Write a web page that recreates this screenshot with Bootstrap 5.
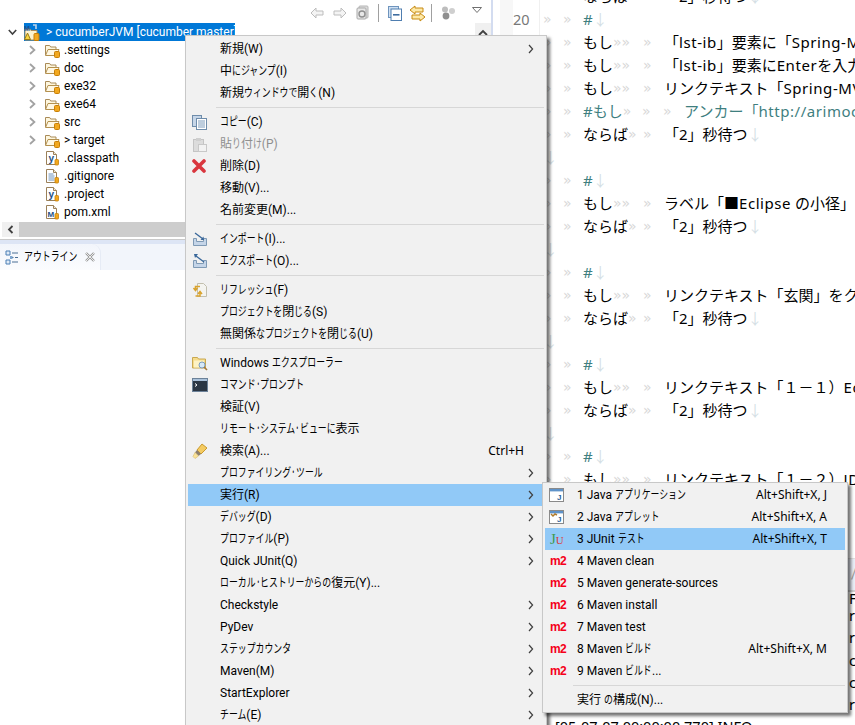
<!DOCTYPE html>
<html lang="ja">
<head>
<meta charset="utf-8">
<title>Eclipse</title>
<link href="https://cdn.jsdelivr.net/npm/bootstrap@5.3.0/dist/css/bootstrap.min.css" rel="stylesheet">
<style>
html,body{height:725px;overflow:hidden;background:#fff}
body{font-family:Roboto,"Noto Sans CJK JP",sans-serif;font-size:12px;color:#000;position:relative}
.wbench{width:855px;height:725px}
.navpane{width:491px;flex:none}
.sash{width:9px;flex:none;background:linear-gradient(90deg,#d3dcf0 0 2px,#fff 2px)}
.edpane{width:355px;flex:none;overflow:hidden}
.tbar{height:23px;padding:3px 0 0 310px;gap:9px}
.tbar .tsep{width:1px;height:18px;background:#a0a0a0}
.tbar .lnkic{margin:0 -4px 0 -2px}
.treewrap{height:199px;overflow:hidden}
.tree{--bs-list-group-bg:transparent;--bs-list-group-border-width:0;--bs-list-group-item-padding-x:0;--bs-list-group-item-padding-y:0;border-radius:0}
.trow{height:18px;line-height:18px;font-size:12px;color:#000;white-space:nowrap}
.trow .chev{width:7px;margin-left:29px;margin-right:8px;flex:none}
.trow .tic{margin-right:4px;flex:none}
.projchev{margin-left:8px;margin-right:7px;flex:none}
.projsel{background:#0078d7;color:#fff;height:18px;width:211px;line-height:18px;flex:none}
.projsel svg{margin-right:6px;flex:none}
.vscroll{width:16px;height:15px;background:#f0f0f0;position:absolute;left:475px;top:23px;text-align:center}
.hscroll{height:15px;background:#cdcdcd;margin-left:2px}
.hscroll .hbtn{width:17px;height:15px;background:#f0f0f0}
.panelgap{height:3px;background:#fff;border-bottom:1px solid #c9c9c9}
.panelband{height:4px;background:#dde5f5}
.tabbar{height:26px;background:#f2f5fb}
.otab{width:101px;height:26px;background:linear-gradient(#f2f5fb 0,#fbfcfe 100%);border-top-right-radius:9px;padding-left:5px;border-right:1px solid #e6ebf5}
.otab .lbl{margin-left:5px;margin-right:8px;font-size:12px;flex:none}
.edsrc{height:558px;flex:none;overflow:hidden;font-family:"Noto Sans","Noto Sans CJK JP",sans-serif;font-size:15px}
.edinner{margin-top:-15px}
.edln{height:23px;line-height:23px;white-space:nowrap}
.lnum{width:40px;flex:none;padding-left:13px;color:#787878;font-size:14.5px;background:linear-gradient(90deg,#f7f7f7 13px,#fff 13px);border-right:1px solid #f0f0f0}
.lbody{padding-left:3px;min-width:0}
.wsm{color:#d8d8d8;width:20px;flex:none;font-family:"DejaVu Sans",sans-serif;font-size:14px}
.wsn{color:#d8d8d8;font-family:"DejaVu Sans",sans-serif;font-size:14px;flex:none}
.kwc{width:81px;flex:none}
.kwl{width:101px;flex:none}
.kwend{margin-left:auto;width:21px}
.kwend2{width:21px}
.cmt{color:#3f7f7f}
.eol{color:#d5dfe5}
.etext{flex:none}
.ltn{letter-spacing:.55px}
.contabs{height:34px;flex:none;background:#e9edf6;border-top:1px solid #e0e0e0;border-bottom:2px solid #d0d0d0;padding-left:351px;color:#9a9a9a;font-size:14px}
.conbody{flex:none;font-family:"Noto Sans",sans-serif;font-size:14.5px;line-height:22.3px;white-space:nowrap}
.conbody .cl{padding-left:349px}
.conbody .cfi{height:12px;line-height:12px}
.conbody .cf{padding-left:55px}
.ctxm{--bs-dropdown-padding-y:0;position:absolute;display:block;margin:0;background:#f1f1f1;border:1px solid #c8c8c8;border-radius:0;box-shadow:3px 3px 3px rgba(0,0,0,.55);font-size:12px;min-width:0}
.mainm{left:185px;top:35px;width:362px;padding:2px 0 0;z-index:5}
.subm{left:542px;top:482px;width:306px;height:231px;padding:1px 0;z-index:6}
.ctxm .dropdown-item{height:22px;line-height:22px;padding:0 10px 0 4px;margin:0 2px;width:auto;color:#000;white-space:nowrap;background:transparent}
.subm .dropdown-item{padding-right:18px}
.ctxm .dropdown-item.hot{background:#91c9f7}
.ctxm .dropdown-item.off{color:#8f8f8f}
.mic{width:28px;flex:none}
.lbl{white-space:nowrap}
.skey{font-family:"Noto Sans",sans-serif}
.mainm .dropdown-item .skey{margin-left:auto;margin-right:10px}
.subm .skey{margin-left:auto}
.marrow{margin-left:auto;flex:none}
.ctxm .dropdown-divider{margin:3px 2px 3px 30px;border-top:1px solid #d7d7d7;opacity:1}
.cnd{display:inline-block;transform-origin:left center;line-height:1}
.m2ic{color:#f5001a;font-weight:700;font-size:12px;font-family:"Liberation Sans",sans-serif;letter-spacing:-.7px;line-height:1;padding-left:1px}
.juic{font-family:"Liberation Serif",serif;font-size:15px;line-height:1;padding-left:1px}
.juic .a{color:#3f9a4f}
.juic .b{color:#d83a3a;font-size:11px}
</style>
</head>
<body>
<svg width="0" height="0" class="position-absolute">
  <defs>
    <symbol id="fld" viewBox="0 0 16 16">
      <path d="M1.5 13V3.5h4.2l1 1.5h5.3v2.2" fill="#fdf6de" stroke="#a98b58"/>
      <path d="M1.5 13.5L4 7.5h11l-2 6z" fill="#fff8e4" stroke="#b4914f"/>
      <rect x="10.5" y="9.5" width="5" height="6" rx="1" fill="#f2a81e" stroke="#c77f06"/>
    </symbol>
    <symbol id="pg" viewBox="0 0 16 16"><path d="M2.5 1.5h7l3 3v10h-10z" fill="#fff" stroke="#9b8058"/><path d="M9.5 1.5v3h3" fill="#f1ead9" stroke="#9b8058"/></symbol>
    <symbol id="chv" viewBox="0 0 7 10"><path d="M1 1l4.4 4L1 9" fill="none" stroke="#a2a2a2" stroke-width="1.8"/></symbol>
    <symbol id="arw" viewBox="0 0 6 10"><path d="M1 1l3.6 4L1 9" fill="none" stroke="#404040" stroke-width="1.2"/></symbol>
    <symbol id="tray" viewBox="0 0 16 16"><path d="M1.5 7.5v7h13v-7h-3v3h-7v-3z" fill="#c5d5e8" stroke="#7f9ab5"/></symbol>
    <symbol id="jwin" viewBox="0 0 15 14"><rect x=".5" y=".5" width="14" height="13" fill="#fff" stroke="#8a8a8a"/><rect x="1" y="1" width="13" height="2.4" fill="#5f93c9"/><text x="8" y="11.5" font-size="8" font-weight="700" fill="#2f5f9a" font-family="Liberation Sans">J</text></symbol>
  </defs>
</svg>

<div class="wbench d-flex">
  <div class="navpane d-flex flex-column">
    <div class="tbar d-flex align-items-center">
      <svg width="14" height="12" viewBox="0 0 14 12"><path d="M6 1L1 6l5 5V8h7V4H6z" fill="#f4f4f4" stroke="#bdbdbd"/></svg>
      <svg width="14" height="12" viewBox="0 0 14 12"><path d="M8 1l5 5-5 5V8H1V4h7z" fill="#f4f4f4" stroke="#bdbdbd"/></svg>
      <svg width="13" height="16" viewBox="0 0 13 16"><rect x="3" y="1" width="9" height="12" rx="1" fill="#ddd" stroke="#b5b5b5"/><rect x="1" y="3" width="9" height="11" rx="1" fill="#e8e8e8" stroke="#a9a9a9"/><circle cx="6" cy="9" r="3" fill="none" stroke="#8f8f8f" stroke-width="1.4"/></svg>
      <span class="tsep"></span>
      <svg width="14" height="15" viewBox="0 0 14 15"><rect x=".5" y=".5" width="10" height="11" fill="#cfe0f3" stroke="#6e94bd"/><rect x="3" y="3" width="10.5" height="11.5" fill="#fff" stroke="#4f7eb0"/><rect x="5" y="8" width="6.5" height="1.6" fill="#3f6d9f"/></svg>
      <svg width="17" height="17" viewBox="0 0 17 17" class="lnkic"><path d="M6 1L1 5l5 4V7h8V3H6z" fill="#fde9a8" stroke="#c78a12"/><path d="M11 8l5 4-5 4v-2H3v-4h8z" fill="#fde9a8" stroke="#c78a12"/></svg>
      <span class="tsep"></span>
      <svg width="15" height="14" viewBox="0 0 15 14"><circle cx="4" cy="3.5" r="3" fill="#bdbdbd"/><circle cx="11" cy="5" r="3" fill="#cfcfcf"/><circle cx="5" cy="10" r="3.4" fill="#8f8f8f"/></svg>
    </div>
    <div class="treewrap">
      <div class="list-group list-group-flush tree">
        <div class="list-group-item trow d-flex align-items-center">
          <svg class="projchev" width="9" height="7" viewBox="0 0 9 7"><path d="M.8 1l3.7 4L8.2 1" fill="none" stroke="#404040" stroke-width="1.6"/></svg>
          <div class="projsel d-flex align-items-center">
            <svg width="16" height="17" viewBox="0 0 16 17"><path d="M1 16V5h5l1 1.5h6V16z" fill="#fdf3cf" stroke="#a98b58"/><text x="0" y="6.5" font-size="7" font-weight="700" fill="#1d4f91" font-family="Liberation Sans">M</text><path d="M9 1h3v4" fill="none" stroke="#bcd3ea" stroke-width="1.6"/><path d="M3.500 9l3 6.500h-6z" fill="#f6d43e" stroke="#9a7a16"/><rect x="10" y="9.500" width="5" height="7" rx="1" fill="#f2a81e" stroke="#c77f06"/></svg>
            <span>&gt; cucumberJVM [cucumber master]</span>
          </div>
        </div>
        <div class="list-group-item trow d-flex align-items-center"><svg class="chev" width="7" height="10"><use href="#chv"/></svg><svg class="tic" width="16" height="16"><use href="#fld"/></svg><span>.settings</span></div>
        <div class="list-group-item trow d-flex align-items-center"><svg class="chev" width="7" height="10"><use href="#chv"/></svg><svg class="tic" width="16" height="16"><use href="#fld"/></svg><span>doc</span></div>
        <div class="list-group-item trow d-flex align-items-center"><svg class="chev" width="7" height="10"><use href="#chv"/></svg><svg class="tic" width="16" height="16"><use href="#fld"/></svg><span>exe32</span></div>
        <div class="list-group-item trow d-flex align-items-center"><svg class="chev" width="7" height="10"><use href="#chv"/></svg><svg class="tic" width="16" height="16"><use href="#fld"/></svg><span>exe64</span></div>
        <div class="list-group-item trow d-flex align-items-center"><svg class="chev" width="7" height="10"><use href="#chv"/></svg><svg class="tic" width="16" height="16"><use href="#fld"/></svg><span>src</span></div>
        <div class="list-group-item trow d-flex align-items-center"><svg class="chev" width="7" height="10"><use href="#chv"/></svg><svg class="tic" width="16" height="16"><use href="#fld"/></svg><span>&gt; target</span></div>
        <div class="list-group-item trow d-flex align-items-center"><svg class="chev invisible" width="7" height="10"></svg><svg class="tic" width="16" height="16" viewBox="0 0 16 16"><use href="#pg"/><text x="4.500" y="12" font-size="10" font-weight="700" fill="#234f86" font-family="Liberation Sans">y</text><rect x="11" y="9.500" width="3.500" height="5.500" rx=".8" fill="#f2a81e" stroke="#c77f06" stroke-width=".8"/></svg><span>.classpath</span></div>
        <div class="list-group-item trow d-flex align-items-center"><svg class="chev invisible" width="7" height="10"></svg><svg class="tic" width="16" height="16" viewBox="0 0 16 16"><use href="#pg"/><path d="M4.500 6h5M4.500 8h6M4.500 10h6M4.500 12h6" stroke="#6d92bd"/><rect x="11" y="9.500" width="3.500" height="5.500" rx=".8" fill="#f2a81e" stroke="#c77f06" stroke-width=".8"/></svg><span>.gitignore</span></div>
        <div class="list-group-item trow d-flex align-items-center"><svg class="chev invisible" width="7" height="10"></svg><svg class="tic" width="16" height="16" viewBox="0 0 16 16"><use href="#pg"/><text x="4.500" y="12" font-size="10" font-weight="700" fill="#234f86" font-family="Liberation Sans">y</text><rect x="11" y="9.500" width="3.500" height="5.500" rx=".8" fill="#f2a81e" stroke="#c77f06" stroke-width=".8"/></svg><span>.project</span></div>
        <div class="list-group-item trow d-flex align-items-center"><svg class="chev invisible" width="7" height="10"></svg><svg class="tic" width="16" height="16" viewBox="0 0 16 16"><use href="#pg"/><text x="3.500" y="12.500" font-size="8" font-weight="700" fill="#234f86" font-family="Liberation Sans">M</text><rect x="11" y="9.500" width="3.500" height="5.500" rx=".8" fill="#f2a81e" stroke="#c77f06" stroke-width=".8"/></svg><span>pom.xml</span></div>
      </div>
    </div>
    <div class="hscroll d-flex">
      <div class="hbtn d-flex align-items-center justify-content-center"><svg width="7" height="9" viewBox="0 0 7 9"><path d="M5.500 1L2 4.500 5.500 8" fill="none" stroke="#404040" stroke-width="1.8"/></svg></div>
    </div>
    <div class="panelgap"></div>
    <div class="panelband"></div>
    <div class="tabbar d-flex">
      <div class="otab d-flex align-items-center">
        <svg width="14" height="15" viewBox="0 0 14 15" class="flex-none"><path d="M1 1h4v4H1zM1 10h4v4H1z" fill="#dfeaf6" stroke="#4a7fb5"/><path d="M7 3h6M7 7.500h1.500M10 7.500h3M7 12h6" stroke="#4a6f95"/><rect x="5" y="6" width="2.500" height="3" fill="#7fa6cf"/></svg>
        <span class="lbl">アウトライン</span>
        <svg width="10" height="10" viewBox="0 0 10 10"><path d="M1 1l8 8M9 1L1 9" stroke="#9a9a9a" stroke-width="2.400" fill="none"/><path d="M1 1l8 8M9 1L1 9" stroke="#fff" stroke-width=".8" fill="none"/></svg>
      </div>
    </div>
  </div>
  <div class="sash"></div>
  <div class="edpane d-flex flex-column">
    <div class="edsrc">
      <div class="edinner">
        <div class="edln d-flex"><span class="lnum"></span><div class="lbody d-flex"><span class="wsm">»</span><span class="wsm">»</span><div class="kwc d-flex"><span>ならば</span><span class="wsn">»</span><span class="wsm kwend">»</span></div><span class="etext">「2」秒待つ</span><span class="eol">↓</span></div></div>
        <div class="edln d-flex"><span class="lnum">20</span><div class="lbody d-flex"><span class="wsm">»</span><span class="wsm">»</span><span class="cmt">#</span><span class="eol">↓</span></div></div>
        <div class="edln d-flex"><span class="lnum"></span><div class="lbody d-flex"><span class="wsm">»</span><span class="wsm">»</span><div class="kwc d-flex"><span>もし</span><span class="wsn">»»</span><span class="wsm kwend">»</span></div><span class="etext">「lst-ib」要素に「Spring-M</span></div></div>
        <div class="edln d-flex"><span class="lnum"></span><div class="lbody d-flex"><span class="wsm">»</span><span class="wsm">»</span><div class="kwc d-flex"><span>もし</span><span class="wsn">»»</span><span class="wsm kwend">»</span></div><span class="etext">「lst-ib」要素にEnterを入力</span></div></div>
        <div class="edln d-flex"><span class="lnum"></span><div class="lbody d-flex"><span class="wsm">»</span><span class="wsm">»</span><div class="kwc d-flex"><span>もし</span><span class="wsn">»»</span><span class="wsm kwend">»</span></div><span class="etext">リンクテキスト「Spring-MV</span></div></div>
        <div class="edln d-flex"><span class="lnum"></span><div class="lbody d-flex"><span class="wsm">»</span><span class="wsm">»</span><div class="kwl d-flex cmt"><span>#もし</span><span class="wsn">»</span><span class="wsm kwend">»</span><span class="wsm kwend2">»</span></div><span class="etext cmt">アンカー「http://arimoc</span></div></div>
        <div class="edln d-flex"><span class="lnum"></span><div class="lbody d-flex"><span class="wsm">»</span><span class="wsm">»</span><div class="kwc d-flex"><span>ならば</span><span class="wsn">»</span><span class="wsm kwend">»</span></div><span class="etext">「2」秒待つ</span><span class="eol">↓</span></div></div>
        <div class="edln d-flex"><span class="lnum"></span><div class="lbody d-flex"><span class="eol">↓</span></div></div>
        <div class="edln d-flex"><span class="lnum"></span><div class="lbody d-flex"><span class="wsm">»</span><span class="wsm">»</span><span class="cmt">#</span><span class="eol">↓</span></div></div>
        <div class="edln d-flex"><span class="lnum"></span><div class="lbody d-flex"><span class="wsm">»</span><span class="wsm">»</span><div class="kwc d-flex"><span>もし</span><span class="wsn">»»</span><span class="wsm kwend">»</span></div><span class="etext">ラベル「■Eclipse の小径」を</span></div></div>
        <div class="edln d-flex"><span class="lnum"></span><div class="lbody d-flex"><span class="wsm">»</span><span class="wsm">»</span><div class="kwc d-flex"><span>ならば</span><span class="wsn">»</span><span class="wsm kwend">»</span></div><span class="etext">「2」秒待つ</span><span class="eol">↓</span></div></div>
        <div class="edln d-flex"><span class="lnum"></span><div class="lbody d-flex"><span class="eol">↓</span></div></div>
        <div class="edln d-flex"><span class="lnum"></span><div class="lbody d-flex"><span class="wsm">»</span><span class="wsm">»</span><span class="cmt">#</span><span class="eol">↓</span></div></div>
        <div class="edln d-flex"><span class="lnum"></span><div class="lbody d-flex"><span class="wsm">»</span><span class="wsm">»</span><div class="kwc d-flex"><span>もし</span><span class="wsn">»»</span><span class="wsm kwend">»</span></div><span class="etext">リンクテキスト「玄関」をク</span></div></div>
        <div class="edln d-flex"><span class="lnum"></span><div class="lbody d-flex"><span class="wsm">»</span><span class="wsm">»</span><div class="kwc d-flex"><span>ならば</span><span class="wsn">»</span><span class="wsm kwend">»</span></div><span class="etext">「2」秒待つ</span><span class="eol">↓</span></div></div>
        <div class="edln d-flex"><span class="lnum"></span><div class="lbody d-flex"><span class="eol">↓</span></div></div>
        <div class="edln d-flex"><span class="lnum"></span><div class="lbody d-flex"><span class="wsm">»</span><span class="wsm">»</span><span class="cmt">#</span><span class="eol">↓</span></div></div>
        <div class="edln d-flex"><span class="lnum"></span><div class="lbody d-flex"><span class="wsm">»</span><span class="wsm">»</span><div class="kwc d-flex"><span>もし</span><span class="wsn">»»</span><span class="wsm kwend">»</span></div><span class="etext">リンクテキスト「１－１）Ec</span></div></div>
        <div class="edln d-flex"><span class="lnum"></span><div class="lbody d-flex"><span class="wsm">»</span><span class="wsm">»</span><div class="kwc d-flex"><span>ならば</span><span class="wsn">»</span><span class="wsm kwend">»</span></div><span class="etext">「2」秒待つ</span><span class="eol">↓</span></div></div>
        <div class="edln d-flex"><span class="lnum"></span><div class="lbody d-flex"><span class="eol">↓</span></div></div>
        <div class="edln d-flex"><span class="lnum"></span><div class="lbody d-flex"><span class="wsm">»</span><span class="wsm">»</span><span class="cmt">#</span><span class="eol">↓</span></div></div>
        <div class="edln d-flex"><span class="lnum"></span><div class="lbody d-flex"><span class="wsm">»</span><span class="wsm">»</span><div class="kwc d-flex"><span>もし</span><span class="wsn">»»</span><span class="wsm kwend">»</span></div><span class="etext">リンクテキスト「１－２）JD</span></div></div>
      </div>
    </div>
    <div class="contabs d-flex align-items-center"><span>/</span></div>
    <div class="conbody">
      <div class="cl cfi">Fi</div>
      <div class="cl">r</div>
      <div class="cl">r</div>
      <div class="cl">c</div>
      <div class="cl">c</div>
      <div class="cl">r</div>
      <div class="cf">[05-07-07 00:00:00.770] INFO</div>
    </div>
  </div>
</div>

<div class="vscroll"><svg width="10" height="7" viewBox="0 0 10 7"><path d="M1 6l4-4 4 4" fill="none" stroke="#404040" stroke-width="1.800"/></svg></div>
<svg class="position-absolute" style="left:472px;top:7px" width="10" height="6" viewBox="0 0 10 6"><path d="M.5.5h9L5 5.500z" fill="#fff" stroke="#707070"/></svg>

<div class="dropdown-menu show ctxm mainm">
  <div class="dropdown-item d-flex align-items-center"><span class="mic"></span><span class="lbl">新規(W)</span><svg class="marrow" width="6" height="10"><use href="#arw"/></svg></div>
  <div class="dropdown-item d-flex align-items-center"><span class="mic"></span><span class="lbl">中にジャンプ(I)</span></div>
  <div class="dropdown-item d-flex align-items-center"><span class="mic"></span><span class="lbl">新規ウィンドウで開く(N)</span></div>
  <hr class="dropdown-divider">
  <div class="dropdown-item d-flex align-items-center"><span class="mic"><svg width="15" height="15" viewBox="0 0 15 15" class="d-block"><rect x=".5" y=".5" width="9" height="11" fill="#c6d6e8" stroke="#6f8dab"/><rect x="4.500" y="3.500" width="10" height="11" fill="#fff" stroke="#6f8dab"/><path d="M6 6h7M6 8h7M6 10h7M6 12h7" stroke="#7d9cbc"/></svg></span><span class="lbl">コピー(C)</span></div>
  <div class="dropdown-item off d-flex align-items-center"><span class="mic"><svg width="15" height="15" viewBox="0 0 15 15" class="d-block"><rect x="1.500" y="2.500" width="10" height="12" fill="#dcdcdc" stroke="#c4c4c4"/><rect x="4" y="1" width="5" height="3" fill="#cfcfcf"/><rect x="6.500" y="7.500" width="8" height="7" fill="#f2f2f2" stroke="#c8c8c8"/></svg></span><span class="lbl">貼り付け(P)</span></div>
  <div class="dropdown-item d-flex align-items-center"><span class="mic"><svg width="14" height="14" viewBox="0 0 14 14" class="d-block"><path d="M2 2l10 10M12 2L2 12" stroke="#d9363e" stroke-width="3.600" stroke-linecap="round"/></svg></span><span class="lbl">削除(D)</span></div>
  <div class="dropdown-item d-flex align-items-center"><span class="mic"></span><span class="lbl">移動(V)...</span></div>
  <div class="dropdown-item d-flex align-items-center"><span class="mic"></span><span class="lbl">名前変更(M)...</span></div>
  <hr class="dropdown-divider">
  <div class="dropdown-item d-flex align-items-center"><span class="mic"><svg width="16" height="16" class="d-block" viewBox="0 0 16 16"><use href="#tray"/><path d="M3 2l8 6" stroke="#39679a" stroke-width="1.300"/><path d="M12 9H8.500l3-3.500z" fill="#39679a"/></svg></span><span class="lbl">インポート(I)...</span></div>
  <div class="dropdown-item d-flex align-items-center"><span class="mic"><svg width="16" height="16" class="d-block" viewBox="0 0 16 16"><use href="#tray"/><path d="M12 9L4 3" stroke="#39679a" stroke-width="1.300"/><path d="M2 1h4L3 5z" fill="#39679a"/></svg></span><span class="lbl">エクスポート(O)...</span></div>
  <hr class="dropdown-divider">
  <div class="dropdown-item d-flex align-items-center"><span class="mic"><svg width="16" height="16" class="d-block" viewBox="0 0 16 16"><path d="M5.500 1.500h6l3 3v10h-9z" fill="#f4f4f0" stroke="#c2bfae"/><path d="M8 4.500H3.500v3M1.500 6l2 2.500 2-2.500M3.500 14H8v-3M6 12l2-2.500 2 2.500" fill="none" stroke="#d9a32e" stroke-width="1.500"/></svg></span><span class="lbl">リフレッシュ(F)</span></div>
  <div class="dropdown-item d-flex align-items-center"><span class="mic"></span><span class="lbl">プロジェクトを閉じる(S)</span></div>
  <div class="dropdown-item d-flex align-items-center"><span class="mic"></span><span class="lbl">無関係なプロジェクトを閉じる(U)</span></div>
  <hr class="dropdown-divider">
  <div class="dropdown-item d-flex align-items-center"><span class="mic"><svg width="16" height="16" class="d-block" viewBox="0 0 16 16"><path d="M.500 13V2.500h5l1 1.500h7v9z" fill="#f6dc8c" stroke="#c9a850"/><rect x="2" y="5.500" width="10" height="7" fill="#fdf2c4"/><circle cx="10" cy="10" r="3" fill="#d5e8f8" stroke="#7b9cc0"/><path d="M12 12l3 3" stroke="#a57a3c" stroke-width="1.600"/></svg></span><span class="lbl">Windows エクスプローラー</span></div>
  <div class="dropdown-item d-flex align-items-center"><span class="mic"><svg width="16" height="14" class="d-block" viewBox="0 0 16 14"><rect x=".5" y=".5" width="15" height="13" fill="#2a3644" stroke="#6c8299"/><rect x="1" y="1" width="14" height="2" fill="#a9c1da"/><path d="M3 5.500l2 1.500-2 1.500" fill="none" stroke="#fff"/></svg></span><span class="lbl">コマンド・プロンプト</span></div>
  <div class="dropdown-item d-flex align-items-center"><span class="mic"></span><span class="lbl">検証(V)</span></div>
  <div class="dropdown-item d-flex align-items-center"><span class="mic"></span><span class="lbl">リモート・システム・ビューに表示</span></div>
  <div class="dropdown-item d-flex align-items-center"><span class="mic"><svg width="16" height="16" class="d-block" viewBox="0 0 16 16"><path d="M10 1l5 4-6 6-4-4z" fill="#f4cb62" stroke="#c99a2e"/><path d="M5 7l4 4-2.500 2L3 9.500z" fill="#8d8070"/><path d="M3 9.500L6.500 13 3 15.500 1 13.500z" fill="#fbe49a" stroke="#d8b868" stroke-width=".6"/></svg></span><span class="lbl">検索(A)...</span><span class="skey">Ctrl+H</span></div>
  <div class="dropdown-item d-flex align-items-center"><span class="mic"></span><span class="lbl">プロファイリング・ツール</span><svg class="marrow" width="6" height="10"><use href="#arw"/></svg></div>
  <div class="dropdown-item hot d-flex align-items-center"><span class="mic"></span><span class="lbl">実行(R)</span><svg class="marrow" width="6" height="10"><use href="#arw"/></svg></div>
  <div class="dropdown-item d-flex align-items-center"><span class="mic"></span><span class="lbl">デバッグ(D)</span><svg class="marrow" width="6" height="10"><use href="#arw"/></svg></div>
  <div class="dropdown-item d-flex align-items-center"><span class="mic"></span><span class="lbl">プロファイル(P)</span><svg class="marrow" width="6" height="10"><use href="#arw"/></svg></div>
  <div class="dropdown-item d-flex align-items-center"><span class="mic"></span><span class="lbl">Quick JUnit(Q)</span><svg class="marrow" width="6" height="10"><use href="#arw"/></svg></div>
  <div class="dropdown-item d-flex align-items-center"><span class="mic"></span><span class="lbl">ローカル・ヒストリーからの復元(Y)...</span></div>
  <div class="dropdown-item d-flex align-items-center"><span class="mic"></span><span class="lbl">Checkstyle</span><svg class="marrow" width="6" height="10"><use href="#arw"/></svg></div>
  <div class="dropdown-item d-flex align-items-center"><span class="mic"></span><span class="lbl">PyDev</span><svg class="marrow" width="6" height="10"><use href="#arw"/></svg></div>
  <div class="dropdown-item d-flex align-items-center"><span class="mic"></span><span class="lbl">ステップカウンタ</span><svg class="marrow" width="6" height="10"><use href="#arw"/></svg></div>
  <div class="dropdown-item d-flex align-items-center"><span class="mic"></span><span class="lbl">Maven(M)</span><svg class="marrow" width="6" height="10"><use href="#arw"/></svg></div>
  <div class="dropdown-item d-flex align-items-center"><span class="mic"></span><span class="lbl">StartExplorer</span><svg class="marrow" width="6" height="10"><use href="#arw"/></svg></div>
  <div class="dropdown-item d-flex align-items-center"><span class="mic"></span><span class="lbl">チーム(E)</span><svg class="marrow" width="6" height="10"><use href="#arw"/></svg></div>
</div>

<div class="dropdown-menu show ctxm subm">
  <div class="dropdown-item d-flex align-items-center"><span class="mic"><svg width="15" height="14" class="d-block"><use href="#jwin"/></svg></span><span class="lbl">1 Java アプリケーション</span><span class="skey">Alt+Shift+X, J</span></div>
  <div class="dropdown-item d-flex align-items-center"><span class="mic"><svg width="15" height="14" class="d-block" viewBox="0 0 15 14"><use href="#jwin" width="15" height="14"/><path d="M2 4l2 2 2-2 2 1" fill="none" stroke="#b07a2a" stroke-width="1.500"/></svg></span><span class="lbl">2 Java アプレット</span><span class="skey">Alt+Shift+X, A</span></div>
  <div class="dropdown-item hot d-flex align-items-center"><span class="mic juic"><span class="a">J</span><span class="b">U</span></span><span class="lbl">3 JUnit テスト</span><span class="skey">Alt+Shift+X, T</span></div>
  <div class="dropdown-item d-flex align-items-center"><span class="mic m2ic">m2</span><span class="lbl">4 Maven clean</span></div>
  <div class="dropdown-item d-flex align-items-center"><span class="mic m2ic">m2</span><span class="lbl">5 Maven generate-sources</span></div>
  <div class="dropdown-item d-flex align-items-center"><span class="mic m2ic">m2</span><span class="lbl">6 Maven install</span></div>
  <div class="dropdown-item d-flex align-items-center"><span class="mic m2ic">m2</span><span class="lbl">7 Maven test</span></div>
  <div class="dropdown-item d-flex align-items-center"><span class="mic m2ic">m2</span><span class="lbl">8 Maven ビルド</span><span class="skey">Alt+Shift+X, M</span></div>
  <div class="dropdown-item d-flex align-items-center"><span class="mic m2ic">m2</span><span class="lbl">9 Maven ビルド...</span></div>
  <hr class="dropdown-divider">
  <div class="dropdown-item d-flex align-items-center"><span class="mic"></span><span class="lbl">実行 の構成(N)...</span></div>
</div>

<script src="https://cdn.jsdelivr.net/npm/bootstrap@5.3.0/dist/js/bootstrap.bundle.min.js"></script>
<script>
/* Meiryo UI sets kana narrower than kanji, and its middle dot narrower still */
function narrow(s,k){
  var w=s.offsetWidth;
  s.style.transform='scaleX('+k+')';
  s.style.marginRight=(-(1-k)*w)+'px';
}
document.querySelectorAll('.lbl').forEach(function(el){
  el.innerHTML=el.textContent.replace(/\u30fb|[\u3040-\u30fa\u30fc-\u30ff]+/g,function(m){
    return '<span class="cnd'+(m==='\u30fb'?' ctdot':'')+'">'+m+'</span>';
  });
  el.querySelectorAll('.cnd').forEach(function(s){narrow(s,s.classList.contains('ctdot')?.38:.74);});
});
/* Meiryo sets Latin a little wider than Noto Sans */
document.querySelectorAll('.etext').forEach(function(el){
  el.innerHTML=el.textContent.replace(/[A-Za-z:\/.\-]+/g,'<span class="ltn">$&</span>');
});
</script>
</body>
</html>
